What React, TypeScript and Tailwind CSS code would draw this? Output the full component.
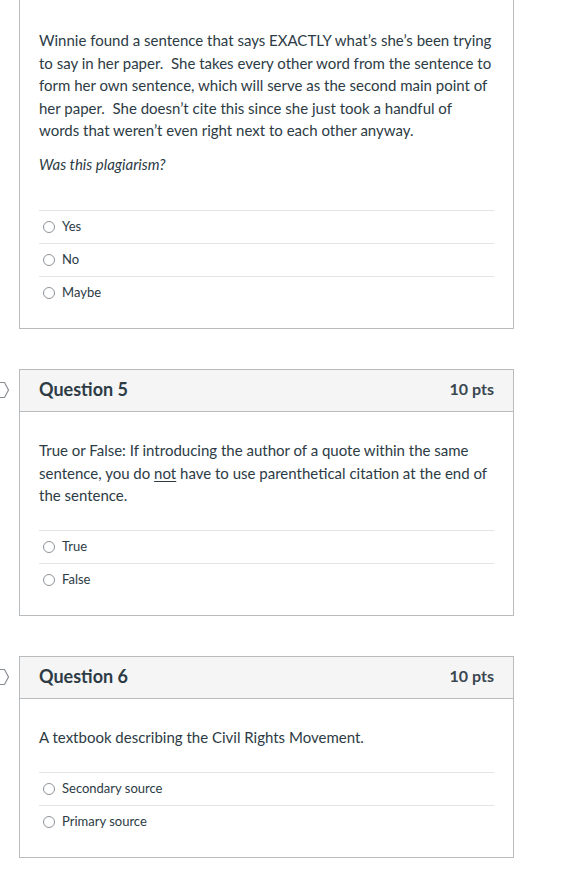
import React from 'react';

type Question = {
  id: number;
  title?: string;
  points?: string;
  text: React.ReactNode;
  answers: string[];
  gap: string;
};

const questions: Question[] = [
  {
    id: 4,
    text: (
      <>
        <p>
          Winnie found a sentence that says EXACTLY what’s she’s been trying to say in her paper.{'\u00a0'} She takes
          every other word from the sentence to form her own sentence, which will serve as the second main point of
          her paper.{'\u00a0'} She doesn’t cite this since she just took a handful of words that weren’t even right next
          to each other anyway.
        </p>
        <p className="mt-[11.5px] italic">Was this plagiarism?</p>
      </>
    ),
    answers: ['Yes', 'No', 'Maybe'],
    gap: 'mt-[34.5px]',
  },
  {
    id: 5,
    title: 'Question 5',
    points: '10 pts',
    text: (
      <p>
        True or False: If introducing the author of a quote within the same sentence, you do{' '}
        <span className="underline underline-offset-2">not</span> have to use parenthetical citation at the end of the
        sentence.
      </p>
    ),
    answers: ['True', 'False'],
    gap: 'mt-[23.5px]',
  },
  {
    id: 6,
    title: 'Question 6',
    points: '10 pts',
    text: <p>A textbook describing the Civil Rights Movement.</p>,
    answers: ['Secondary source', 'Primary source'],
    gap: 'mt-[23.5px]',
  },
];

// bandeira de marcar questão (cortada na borda da tela)
const FlagIcon = () => (
  <svg width="12" height="18" viewBox="0 0 12 18" className="block">
    <path d="M-2 1.5 H6.5 L10.5 9 L6.5 16.5 H-2" fill="none" stroke="#8a8f94" strokeWidth="1.2" />
  </svg>
);

const Radio = () => (
  <span className="ml-[4px] mr-[7px] inline-block h-[12px] w-[12px] shrink-0 rounded-full border border-[#8d9399] bg-white" />
);

const QuestionCard = ({ q, first }: { q: Question; first?: boolean }) => (
  <div className={`flex ${first ? '' : 'mt-[40px]'}`}>
    <div className="w-[19px] shrink-0 overflow-hidden">
      {q.title && (
        <div className="flex h-[42px] items-center">
          <div className="-ml-[2px]">
            <FlagIcon />
          </div>
        </div>
      )}
    </div>
    <div className={`w-[495px] border border-[#b9bcbf] bg-white ${first ? 'border-t-0' : ''}`}>
      {q.title && (
        <div className="flex h-[42px] items-center justify-between border-b border-[#b9bcbf] bg-[#f5f5f5] px-[19px] pb-[3px]">
          <span className="text-[18px] font-bold text-[#2d3b45]">{q.title}</span>
          <span className="text-[16px] font-bold text-[#3b4750]">{q.points}</span>
        </div>
      )}
      <div className={`px-[19px] pb-[19px] ${first ? 'pt-[29px]' : 'pt-[27px]'}`}>
        <div className="text-[15px] leading-[22.5px] text-[#2d3b45]">{q.text}</div>
        <div className={q.gap}>
          {q.answers.map((a) => (
            <div key={a} className="flex h-[33px] items-center border-t border-[#e2e4e6] text-[13px] text-[#2d3b45]">
              <Radio />
              <span>{a}</span>
            </div>
          ))}
        </div>
      </div>
    </div>
  </div>
);

export default function App() {
  return (
    <div className="min-h-[870px] w-[578px] bg-white font-['Lato','Liberation_Sans',sans-serif]">
      {questions.map((q, i) => (
        <QuestionCard key={q.id} q={q} first={i === 0} />
      ))}
    </div>
  );
}
